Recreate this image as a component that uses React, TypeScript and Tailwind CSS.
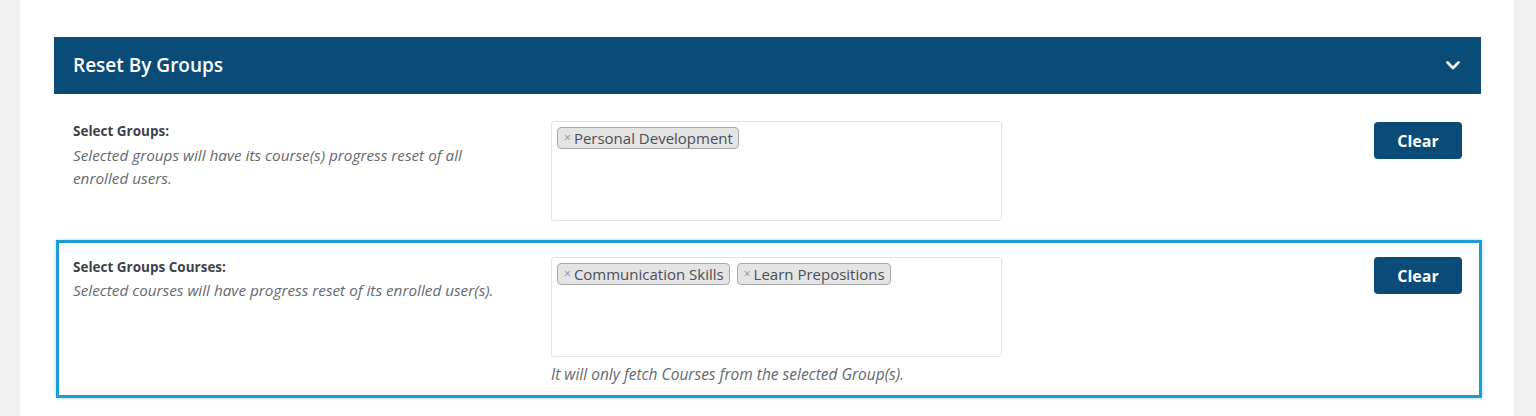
const font = { fontFamily: '"Open Sans", "Noto Sans", sans-serif' };

function Tag({ label }: { label: string }) {
  return (
    <span className="inline-flex h-[22px] items-center rounded-[4px] border border-[#aaaaaa] bg-[#e4e4e4] pl-[6px] pr-[5px] text-[15px] leading-none text-[#4a4f55]">
      <span className="mr-[3px] text-[12px] text-[#8c8f94]">×</span>
      {label}
    </span>
  );
}

function ClearButton() {
  return (
    <button className="ml-auto h-[37px] w-[88px] rounded-[4px] bg-[#0a4b78] text-[16px] font-bold text-white">
      Clear
    </button>
  );
}

export default function App() {
  return (
    <div className="min-h-screen bg-[#f0f0f1] pl-[20px] pr-[22px]" style={font}>
      <div className="min-h-screen bg-white pl-[34px] pr-[33px] pt-[37px]">
        {/* Header */}
        <div className="flex h-[57px] items-center justify-between bg-[#0a4b78] pl-[19px] pr-[21px]">
          <h2 className="text-[19px] font-semibold text-white">Reset By Groups</h2>
          <svg width="14" height="9" viewBox="0 0 14 9" fill="none">
            <path d="M1.5 1.5 7 7l5.5-5.5" stroke="white" strokeWidth="2.6" strokeLinecap="round" strokeLinejoin="round" />
          </svg>
        </div>

        {/* Select groups */}
        <div className="flex items-start pb-[19px] pl-[19px] pr-[19px] pt-[27px]">
          <div className="w-[478px] shrink-0">
            <div className="text-[13.5px] font-bold leading-[20px] text-[#3c434a]">Select Groups:</div>
            <p className="mt-[3px] max-w-[420px] text-[15.3px] italic leading-[23px] text-[#646970]">
              Selected groups will have its course(s) progress reset of all enrolled users.
            </p>
          </div>
          <div className="flex h-[100px] w-[451px] flex-wrap content-start gap-[7px] rounded-[3px] border border-[#e2e4e7] p-[5px]">
            <Tag label="Personal Development" />
          </div>
          <div className="mt-[1px] flex flex-1">
            <ClearButton />
          </div>
        </div>

        {/* Select groups courses (focused) */}
        <div className="ml-[2px] mr-[-1px] border-[3px] border-[#1f9bd7] pb-[10px] pl-[14px] pr-[17px] pt-[14px] shadow-[0_0_3px_#8fd6f7]">
          <div className="flex items-start">
            <div className="w-[478px] shrink-0">
              <div className="text-[13.5px] font-bold leading-[20px] text-[#3c434a]">Select Groups Courses:</div>
              <p className="mt-[2px] text-[15.3px] italic leading-[23px] text-[#646970]">
                Selected courses will have progress reset of its enrolled user(s).
              </p>
            </div>
            <div>
              <div className="flex h-[100px] w-[451px] flex-wrap content-start gap-[7px] rounded-[3px] border border-[#e2e4e7] p-[5px]">
                <Tag label="Communication Skills" />
                <Tag label="Learn Prepositions" />
              </div>
              <p className="mt-[6px] text-[15.5px] italic leading-[22px] text-[#646970]">
                It will only fetch Courses from the selected Group(s).
              </p>
            </div>
            <div className="flex flex-1">
              <ClearButton />
            </div>
          </div>
        </div>
      </div>
    </div>
  );
}
